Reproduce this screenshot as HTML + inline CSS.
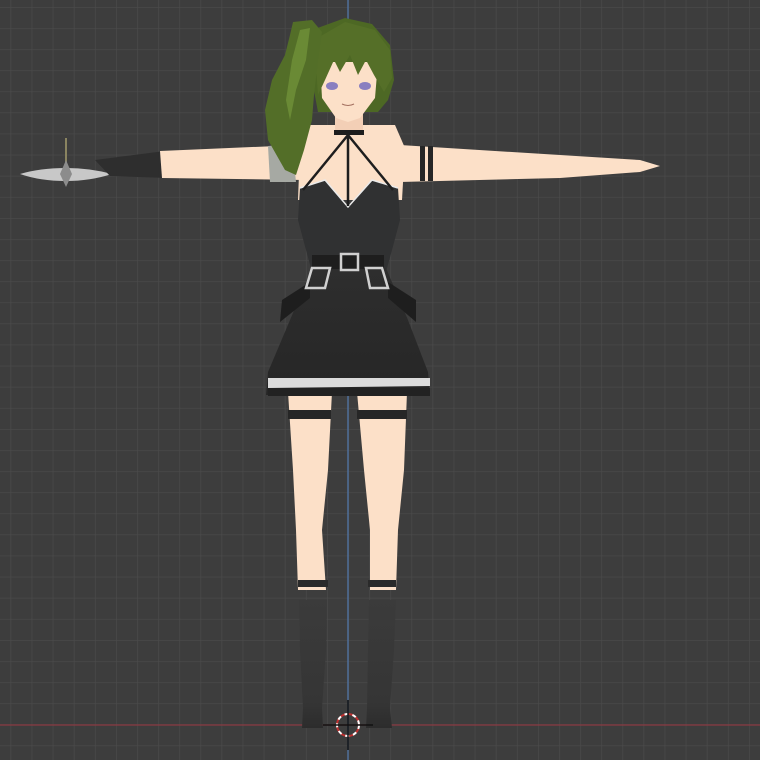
<!DOCTYPE html>
<html><head><meta charset="utf-8"><style>
html,body{margin:0;padding:0;background:#3d3d3d;}
svg{display:block}
</style></head><body>
<svg width="760" height="760" viewBox="0 0 760 760" xmlns="http://www.w3.org/2000/svg">
<defs>
<pattern id="g" x="10.5" y="7" width="21.1" height="21.1" patternUnits="userSpaceOnUse">
<path d="M0 0H21.1M0 0V21.1" stroke="#4b4b4b" stroke-width="1.3" fill="none"/>
</pattern>
<linearGradient id="boot" x1="0" y1="0" x2="0" y2="1"><stop offset="0" stop-color="#3b3b3b"/><stop offset="0.8" stop-color="#353535"/><stop offset="1" stop-color="#2c2c2c"/></linearGradient>
<linearGradient id="skirt" x1="0" y1="0" x2="0" y2="1"><stop offset="0" stop-color="#2e2e2e"/><stop offset="1" stop-color="#262626"/></linearGradient>
</defs>
<rect width="760" height="760" fill="#3d3d3d"/>
<rect width="760" height="760" fill="url(#g)"/>
<line x1="348" y1="0" x2="348" y2="760" stroke="#4f6f9a" stroke-width="1.5"/>
<line x1="0" y1="725" x2="760" y2="725" stroke="#8a3a42" stroke-width="1.2"/>

<!-- weapon -->
<line x1="66" y1="138" x2="66" y2="170" stroke="#8a8460" stroke-width="2"/>
<path d="M20 174 Q40 168 66 168 Q90 168 112 174 Q90 181 66 181 Q40 181 20 174Z" fill="#c8c8c8"/>
<path d="M66 160 L72 174 L66 187 L60 174Z" fill="#8c8c8c"/>
<!-- left glove & arm -->
<path d="M95 160 L165 151 L168 178 L110 176 Z" fill="#2e2e2e"/>
<path d="M160 151 L300 145 L305 180 L162 178 Z" fill="#fce0c8"/>
<path d="M268 146 L292 144 L296 182 L270 182 Z" fill="#a6a9a3"/>
<!-- right arm -->
<path d="M400 145 L560 155 L640 160 L660 166 L640 172 L560 178 L400 182 Z" fill="#fce0c8"/>
<rect x="420" y="146" width="5" height="35" fill="#262626"/>
<rect x="428" y="146" width="5" height="35" fill="#262626"/>
<!-- legs -->
<path d="M288 392 L332 392 L328 470 L322 530 L326 590 L298 590 L296 530 L293 470 Z" fill="#fce0c8"/>
<path d="M357 392 L407 392 L404 470 L398 530 L396 590 L370 590 L370 530 L364 470 Z" fill="#fce0c8"/>
<rect x="288" y="410" width="43" height="9" fill="#262626"/>
<rect x="357" y="410" width="50" height="9" fill="#262626"/>
<rect x="298" y="580" width="30" height="7" fill="#2a2a2a"/>
<rect x="368" y="580" width="28" height="7" fill="#2a2a2a"/>
<!-- boots -->
<path d="M299 600 L327 600 L326 650 L322 708 L323 728 L302 728 L303 708 L300 650 Z" fill="url(#boot)"/>
<path d="M369 600 L396 600 L394 650 L390 708 L392 728 L366 728 L367 708 L368 650 Z" fill="url(#boot)"/>
<!-- torso skin -->
<path d="M310 125 L395 125 L405 148 L402 200 L298 200 L300 148 Z" fill="#fce0c8"/>
<!-- dress -->
<path d="M300 188 L325 180 L348 207 L372 180 L398 188 L400 220 L392 250 L386 272 L312 272 L306 250 L298 220 Z" fill="#303132"/>
<path d="M300 188 L325 180 L348 207 L372 180 L398 188" stroke="#eaeaea" stroke-width="1.5" fill="none"/>
<path d="M312 268 L386 268 L408 320 L428 372 L430 395 L266 395 L268 372 L290 320 Z" fill="url(#skirt)"/>
<path d="M268 378 L430 378 L430 386 L268 388 Z" fill="#dcdcdc"/>
<rect x="268" y="388" width="162" height="8" fill="#222"/>
<path d="M282 300 L310 282 L310 298 L280 322 Z" fill="#1e1e1e"/>
<path d="M388 282 L416 300 L416 322 L388 298 Z" fill="#1e1e1e"/>
<rect x="312" y="255" width="72" height="14" fill="#1e1e1e"/>
<rect x="341" y="254" width="17" height="16" fill="none" stroke="#d0d0d0" stroke-width="2.5"/>
<path d="M312 268 L330 268 L325 288 L306 288 Z" fill="none" stroke="#d0d0d0" stroke-width="2.5"/>
<path d="M366 268 L382 268 L388 288 L370 288 Z" fill="none" stroke="#d0d0d0" stroke-width="2.5"/>
<!-- halter straps -->
<path d="M348 135 L303 190 M348 135 L393 190 M348 135 L348 206" stroke="#1e1e1e" stroke-width="2.5" fill="none"/>
<!-- neck & choker -->
<rect x="335" y="112" width="28" height="22" fill="#f3cfb6"/>
<rect x="334" y="130" width="30" height="5" fill="#1e1e1e"/>
<!-- hair back -->
<path d="M312 30 L345 18 L372 24 L390 45 L394 80 L388 100 L378 112 L318 112 L312 80 Z" fill="#4d6824"/>
<!-- face -->
<path d="M320 62 L378 62 L375 98 L360 118 L348 122 L336 118 L322 98 Z" fill="#fce0c8"/>
<ellipse cx="332" cy="86" rx="6" ry="4" fill="#8a7fc0"/>
<ellipse cx="365" cy="86" rx="6" ry="4" fill="#8a7fc0"/>
<path d="M342 104 Q348 107 354 104" stroke="#a47060" stroke-width="1" fill="none"/>
<!-- bangs -->
<path d="M314 40 L345 22 L375 30 L390 50 L392 78 L384 92 L374 75 L366 60 L358 75 L350 55 L340 72 L334 60 L325 80 L318 95 Z" fill="#556f28"/>
<!-- ponytail -->
<path d="M293 22 L312 20 L322 32 L318 60 L314 95 L312 120 L304 150 L296 175 L285 170 L268 140 L265 110 L272 80 L285 55 L290 35 Z" fill="#536e28"/>
<path d="M300 30 L310 28 L306 60 L296 90 L290 120 L286 100 L292 60 Z" fill="#6a8a35"/>
<!-- 3d cursor -->
<circle cx="348" cy="725" r="11" fill="none" stroke="#c03030" stroke-width="2"/>
<circle cx="348" cy="725" r="11" fill="none" stroke="#fff" stroke-width="2" stroke-dasharray="4 4"/>
<path d="M348 700 V750 M323 725 H373" stroke="#111" stroke-width="1.5"/>
</svg>
</body></html>
